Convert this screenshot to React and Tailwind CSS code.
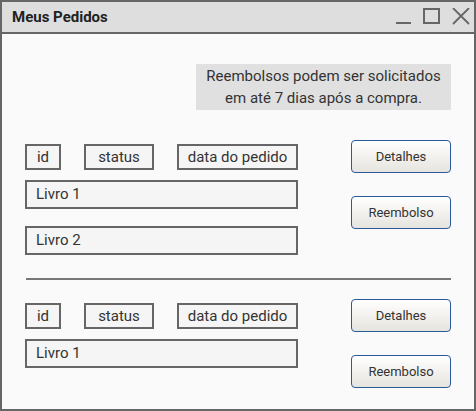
import React from 'react';

const font = { fontFamily: 'Roboto, "Liberation Sans", sans-serif' };

function Field({ className = '', children }) {
  return (
    <div className={`border-2 border-[#666] bg-[#f5f5f5] text-[15px] text-[#333] flex items-center ${className}`}>
      {children}
    </div>
  );
}

function Btn({ children }) {
  return (
    <button className="w-[100px] h-[33px] rounded-[4px] border border-[#2a5a9a] bg-gradient-to-b from-white to-[#e6e4de] text-[13px] text-[#333] flex items-center justify-center">
      {children}
    </button>
  );
}

function Header() {
  return (
    <div className="flex gap-[23px] h-[26px]">
      <Field className="w-[36px] justify-center">id</Field>
      <Field className="w-[70px] justify-center">status</Field>
      <Field className="w-[121px] justify-center">data do pedido</Field>
    </div>
  );
}

function Order({ books }) {
  return (
    <div className="flex justify-between items-start">
      <div className="w-[273px] mt-[4px] flex flex-col">
        <Header />
        {books.map((b, i) => (
          <Field key={b} className={`h-[29px] pl-[9px] ${i === 0 ? 'mt-[10px]' : 'mt-[17px]'}`}>
            {b}
          </Field>
        ))}
      </div>
      <div className="flex flex-col gap-[23px]">
        <Btn>Detalhes</Btn>
        <Btn>Reembolso</Btn>
      </div>
    </div>
  );
}

export default function App() {
  return (
    <div style={font} className="w-[476px] h-[411px] border-2 border-[#666] bg-[#fafafa] flex flex-col overflow-hidden">
      <div className="h-[32px] bg-[#dedede] border-b-2 border-[#666] flex items-center justify-between pl-[10px] pr-[4px] shrink-0">
        <span className="text-[15px] font-bold text-[#222]">Meus Pedidos</span>
        <div className="flex items-center gap-[11px] text-[#666]">
          <svg width="16" height="18" viewBox="0 0 16 18">
            <path d="M0 15 H15" stroke="#666" strokeWidth="2" />
          </svg>
          <svg width="18" height="18" viewBox="0 0 18 18">
            <rect x="1" y="1" width="15" height="14" fill="none" stroke="#666" strokeWidth="2" />
          </svg>
          <svg width="18" height="18" viewBox="0 0 18 18">
            <path d="M1 0 L17 16 M17 0 L1 16" stroke="#666" strokeWidth="1.8" />
          </svg>
        </div>
      </div>
      <div className="px-[23px] flex flex-col">
        <div className="self-end mt-[30px] w-[255px] h-[46px] bg-[#e0e0e0] flex items-center justify-center text-center text-[15px] leading-[22px] text-[#333]">
          Reembolsos podem ser solicitados<br />em até 7 dias após a compra.
        </div>
        <div className="mt-[30px]">
          <Order books={['Livro 1', 'Livro 2']} />
        </div>
        <div className="mt-[23px] ml-[1px] h-[2px] bg-[#777]" />
        <div className="mt-[19px]">
          <Order books={['Livro 1']} />
        </div>
      </div>
    </div>
  );
}
